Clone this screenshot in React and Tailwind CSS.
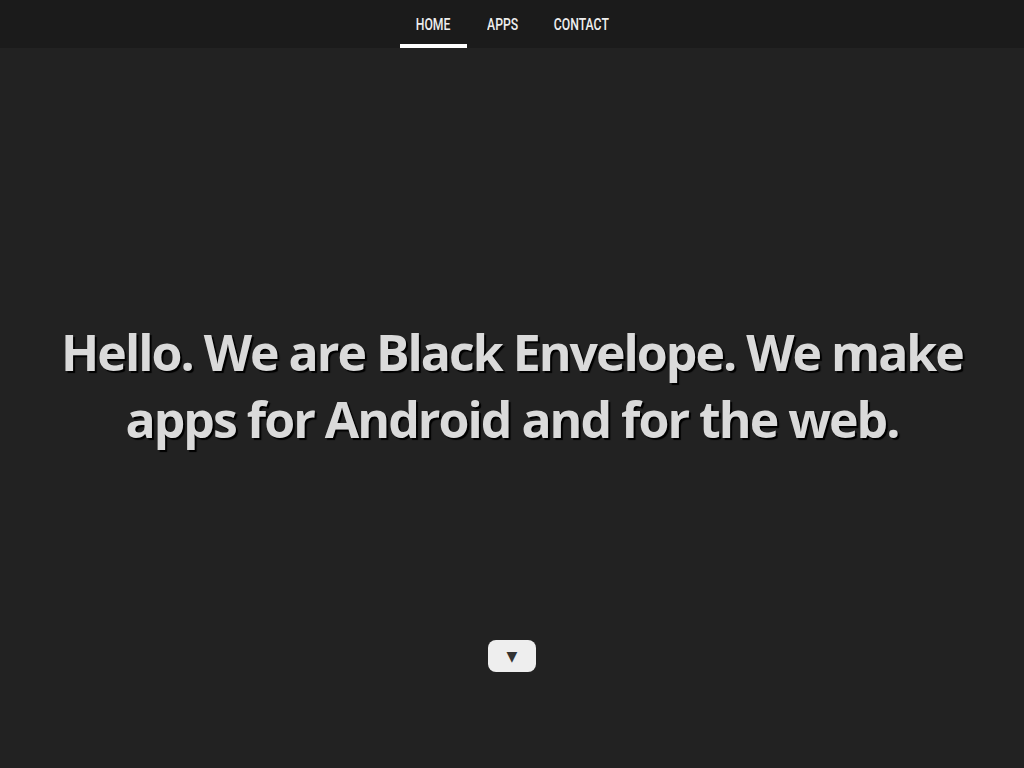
export default function App() {
    const links = [
        { label: 'HOME', w: 'w-[67px]' },
        { label: 'APPS', w: 'w-[63px]' },
        { label: 'CONTACT', w: 'w-[86px]' },
    ];

    return (
        <div className="min-h-screen bg-[#222222] flex flex-col">
            {/* Nav */}
            <nav className="h-12 bg-[#1b1b1b] flex justify-center gap-1">
                {links.map((l, i) => (
                    <a
                        key={l.label}
                        href="#"
                        className={`${l.w} h-12 flex items-center justify-center border-b-4 pt-[5px] ${i === 0 ? 'border-white' : 'border-transparent'}`}
                    >
                        <span className="inline-block scale-x-[0.72] text-[17px] font-medium text-[#eeeeee] font-['Roboto',sans-serif] whitespace-nowrap">
                            {l.label}
                        </span>
                    </a>
                ))}
            </nav>

            {/* Hero */}
            <main className="h-[720px] flex flex-col items-center">
                <h1 className="mt-[271px] text-center text-[50px] leading-[67px] font-bold text-[#dadada] font-['Open_Sans',sans-serif] tracking-[-2px] [text-shadow:2px_2px_1px_#000]">
                    <span className="block whitespace-nowrap">Hello. We are Black Envelope. We make</span>
                    <span className="block whitespace-nowrap">apps for Android and for the web.</span>
                </h1>
                <button className="mt-[187px] w-12 h-8 rounded-lg bg-[#eeeeee] text-[#333333] text-sm flex items-center justify-center font-['DejaVu_Sans',sans-serif]">
                    ▼
                </button>
            </main>
        </div>
    );
}
